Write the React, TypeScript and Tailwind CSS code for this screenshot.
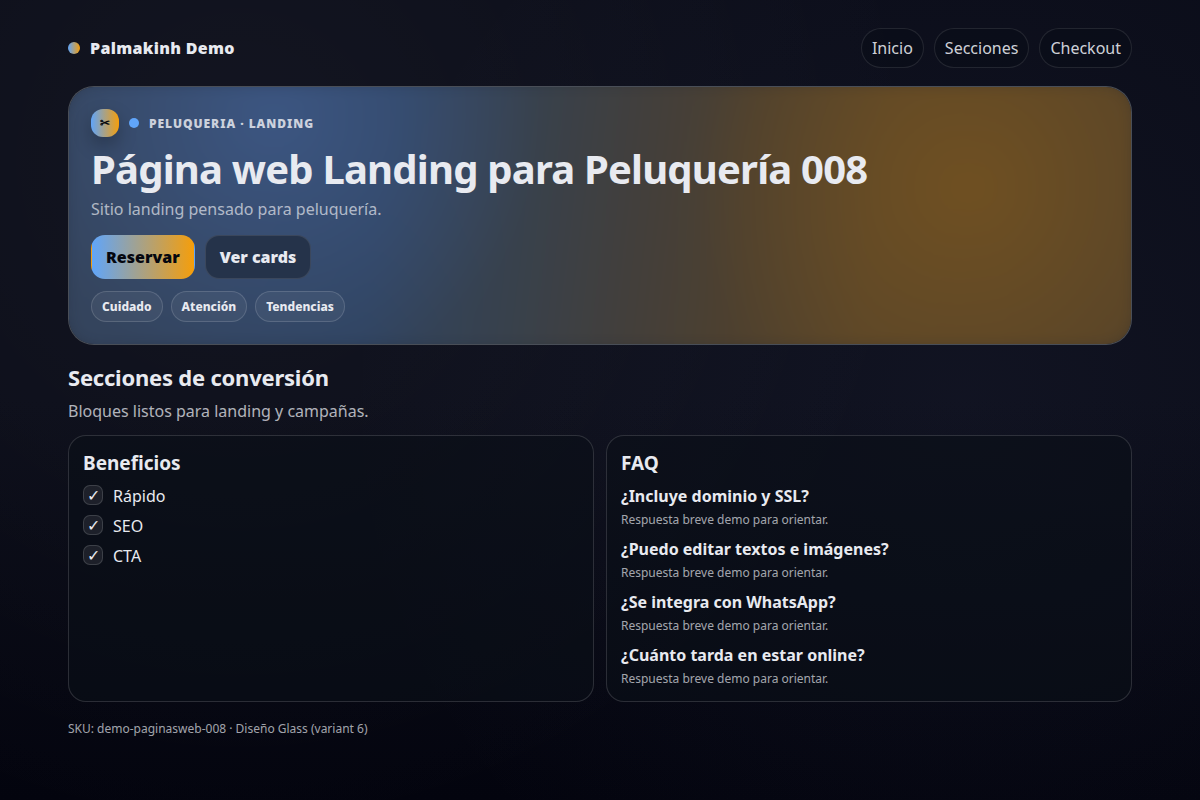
const NAV_LINKS = [
  { label: 'Inicio',    href: '#inicio'    },
  { label: 'Secciones', href: '#secciones' },
  { label: 'Checkout',  href: '#checkout'  },
]

const CHIPS = ['Cuidado', 'Atención', 'Tendencias']

const BENEFITS = ['Rápido', 'SEO', 'CTA']

const FAQ_ITEMS = [
  { q: '¿Incluye dominio y SSL?',        a: 'Respuesta breve demo para orientar.' },
  { q: '¿Puedo editar textos e imágenes?', a: 'Respuesta breve demo para orientar.' },
  { q: '¿Se integra con WhatsApp?',      a: 'Respuesta breve demo para orientar.' },
  { q: '¿Cuánto tarda en estar online?', a: 'Respuesta breve demo para orientar.' },
]

// ── Glass card wrapper ─────────────────────────────────────────
function Card({ title, children }: { title: string; children: React.ReactNode }) {
  return (
    <article className="rounded-[18px] border border-white/14 bg-[#0a0f18]/60 px-3.5 pt-3.5 pb-[13px]">
      <h3 className="mb-2 text-[19px] leading-[26px] font-bold">{title}</h3>
      {children}
    </article>
  )
}

// ── Top bar ────────────────────────────────────────────────────
function Header() {
  return (
    <header className="mb-[18px] flex items-center justify-between">
      <div className="flex items-center gap-2.5 font-black tracking-[0.02em]">
        <span className="size-3 rounded-full bg-[linear-gradient(90deg,#60a5fa,#f59e0b)]" />
        Palmakinh Demo
      </div>
      <nav className="flex flex-wrap gap-2.5">
        {NAV_LINKS.map(l => (
          <a key={l.label} href={l.href}
             className="rounded-full border border-white/10 bg-[#070b15]/50 px-2.5 py-[7px] leading-6 text-[#e8eaf0]/90">
            {l.label}
          </a>
        ))}
      </nav>
    </header>
  )
}

// ── Hero ───────────────────────────────────────────────────────
function Hero() {
  return (
    <section id="inicio"
      className="relative overflow-hidden rounded-[26px] border border-white/20 bg-[#1c222d] p-[22px]">
      {/* Colour glow */}
      <div className="absolute -inset-3 rounded-[38px] bg-[radial-gradient(circle_at_20%_15%,rgba(70,104,165,0.5),transparent_30%),radial-gradient(circle_at_84%_40%,rgba(128,88,28,0.6),transparent_30%),linear-gradient(97deg,#35445c,#30435f_30%,#38414c_43%,#423f3c_53%,#4d402f_63%,#57442a_75%,#54422a)] blur-[10px]" />
      <div className="relative">
        <div className="mb-2.5 flex items-center gap-2.5">
          <span className="grid size-7 place-items-center rounded-xl bg-[linear-gradient(90deg,#60a5fa,#f59e0b)] text-xs font-bold text-[#05070f] shadow-[0_8px_18px_rgba(0,0,0,0.25)]">✂</span>
          <span className="size-2.5 rounded-full bg-[#60a5fa]" />
          <span className="text-xs leading-[21px] font-black tracking-[0.08em] text-[#e8eaf0]/85 uppercase">Peluqueria · Landing</span>
        </div>
        <h1 className="mb-1.5 text-[40px] leading-[44px] font-bold tracking-[-0.02em]">
          Página web Landing para Peluquería 008
        </h1>
        <p className="mb-3.5 leading-6 text-[#e8eaf0]/70">Sitio landing pensado para peluquería.</p>
        <div className="mb-3 flex flex-wrap gap-2.5">
          <button className="rounded-[14px] border border-transparent bg-[linear-gradient(90deg,#60a5fa,#f59e0b)] px-3.5 py-[9px] leading-6 font-black text-[#05070f]">
            Reservar
          </button>
          <button className="rounded-[14px] border border-white/10 bg-[#25334a] px-3.5 py-[9px] leading-6 font-black">
            Ver cards
          </button>
        </div>
        <ul className="flex flex-wrap gap-2">
          {CHIPS.map(c => (
            <li key={c} className="rounded-full border border-white/14 bg-white/5 px-2.5 py-1.5 text-xs leading-[17px] font-extrabold">{c}</li>
          ))}
        </ul>
      </div>
    </section>
  )
}

export default function App() {
  return (
    <div className="min-h-screen bg-[#03040e] bg-[radial-gradient(circle_at_20%_20%,rgba(255,255,255,0.04),transparent_60%),radial-gradient(circle_at_80%_50%,rgba(150,160,220,0.05),transparent_60%),linear-gradient(180deg,#0a0c18,#0a0c18_50%,#03040e)] font-['Noto_Sans',sans-serif] text-base text-[#e8eaf0]">
      <div className="mx-auto max-w-[1100px] px-[18px] py-7">
        <Header />
        <Hero />

        <section id="secciones" className="mt-[18px]">
          <h2 className="mb-2 text-[22px] leading-7 font-bold tracking-[-0.01em]">Secciones de conversión</h2>
          <p className="mb-3 leading-6 text-[#e8eaf0]/75">Bloques listos para landing y campañas.</p>
          <div className="grid grid-cols-1 gap-3 md:grid-cols-2">
            <Card title="Beneficios">
              <ul className="flex flex-col gap-1.5">
                {BENEFITS.map(b => (
                  <li key={b} className="flex items-start gap-2.5 leading-6">
                    <span className="mt-px flex size-5 items-center justify-center rounded-[7px] border border-white/14 bg-white/8 leading-[18px]">✓</span>
                    {b}
                  </li>
                ))}
              </ul>
            </Card>
            <Card title="FAQ">
              <dl className="flex flex-col gap-2">
                {FAQ_ITEMS.map(f => (
                  <div key={f.q}>
                    <dt className="mb-[3px] leading-6 font-bold">{f.q}</dt>
                    <dd className="text-xs leading-[18px] text-[#e8eaf0]/70">{f.a}</dd>
                  </div>
                ))}
              </dl>
            </Card>
          </div>
        </section>

        <footer className="mt-[18px] text-xs leading-[18px] text-[#e8eaf0]/70">
          SKU: demo-paginasweb-008 · Diseño Glass (variant 6)
        </footer>
      </div>
    </div>
  )
}
